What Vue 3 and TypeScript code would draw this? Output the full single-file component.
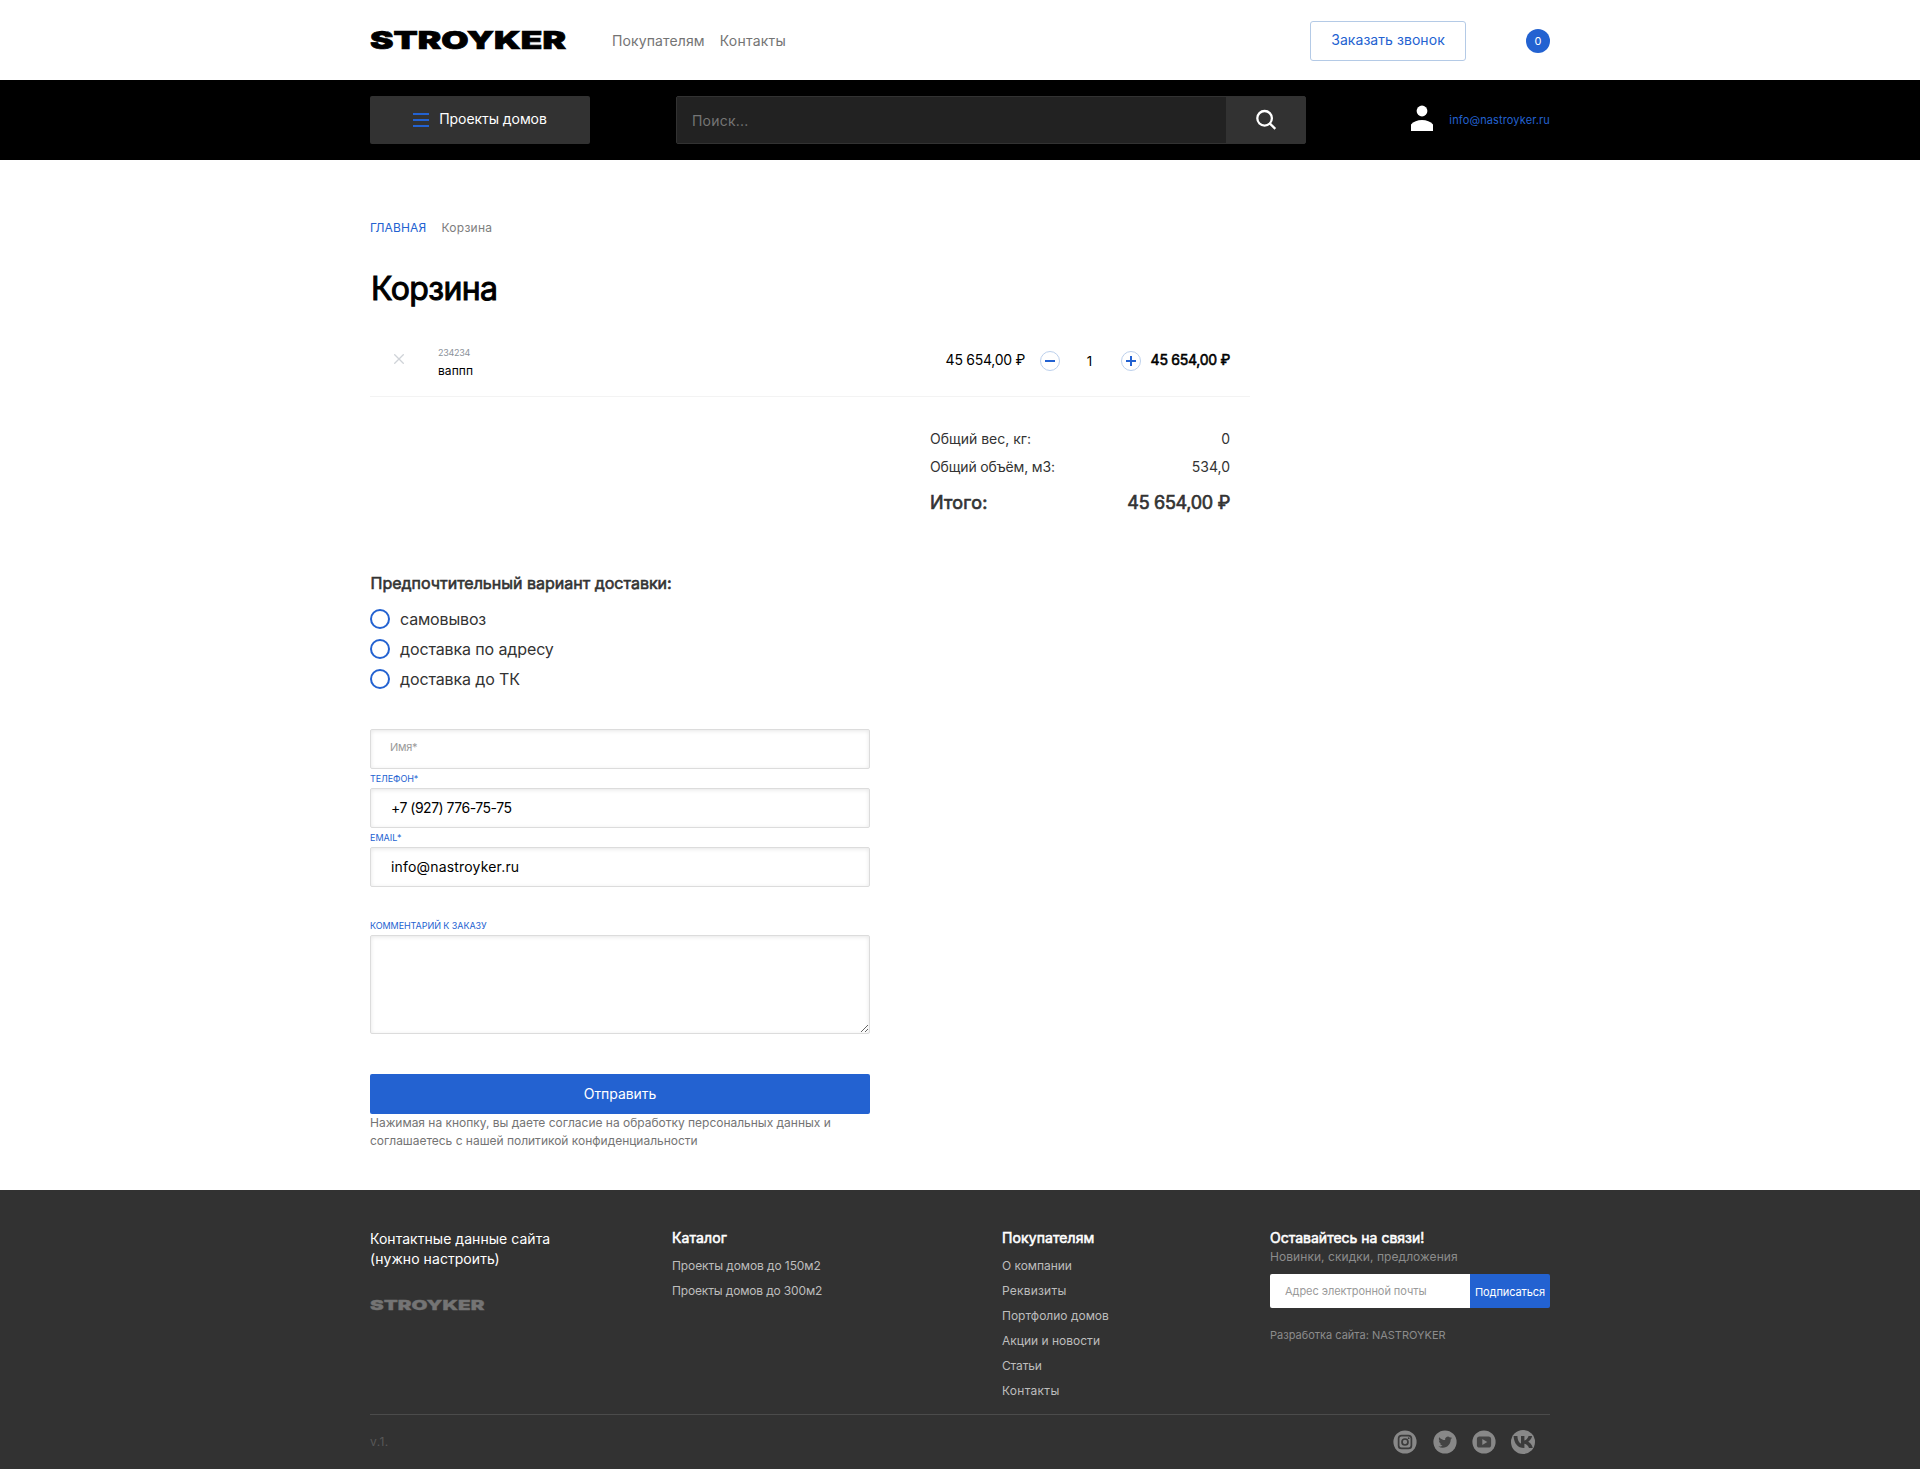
<script setup lang="ts">
import { ref } from 'vue'

interface Item {
  text: string
  spacing: number
}

const navLinks: Item[] = [
  { text: 'Покупателям', spacing: 0.12 },
  { text: 'Контакты', spacing: 0.22 },
]

const deliveries: Item[] = [
  { text: 'самовывоз', spacing: -0.16 },
  { text: 'доставка по адресу', spacing: -0.12 },
  { text: 'доставка до ТК', spacing: -0.13 },
]

const catalog: Item[] = [
  { text: 'Проекты домов до 150м2', spacing: -0.089 },
  { text: 'Проекты домов до 300м2', spacing: -0.151 },
]

const customerLinks: Item[] = [
  { text: 'О компании', spacing: -0.05 },
  { text: 'Реквизиты', spacing: 0.2 },
  { text: 'Портфолио домов', spacing: 0 },
  { text: 'Акции и новости', spacing: 0 },
  { text: 'Статьи', spacing: -0.15 },
  { text: 'Контакты', spacing: 0.27 },
]

const name = ref('')
const phone = ref('+7 (927) 776-75-75')
const email = ref('info@nastroyker.ru')
const comment = ref('')
const quantity = ref(1)
const delivery = ref('')
</script>

<template>
  <div class="page">
    <header>
      <div class="topbar wrap">
        <svg class="logo" viewBox="0 0 196 32" width="196" height="32">
          <text x="0" y="25" textLength="196" lengthAdjust="spacingAndGlyphs">STROYKER</text>
        </svg>
        <nav class="nav">
          <a v-for="l in navLinks" :key="l.text" :style="{ letterSpacing: l.spacing + 'px' }">{{ l.text }}</a>
        </nav>
        <button class="call" type="button">Заказать звонок</button>
        <span class="badge">0</span>
      </div>
      <div class="darkbar">
        <div class="wrap darkrow">
          <button class="menu" type="button">
            <span class="burger"><i></i><i></i><i></i></span>
            <span class="menu-label">Проекты домов</span>
          </button>
          <form class="search" @submit.prevent>
            <input type="text" placeholder="Поиск..." />
            <button type="submit" aria-label="Поиск">
              <svg width="22" height="22" viewBox="0 0 22 22" fill="none" stroke="#fff" stroke-width="2.3">
                <circle cx="9.6" cy="9.3" r="7.3" />
                <path d="M14.7 14.4l5.6 5.4" />
              </svg>
            </button>
          </form>
          <div class="user">
            <svg width="22" height="26" viewBox="0 0 22 26" fill="#fff">
              <circle cx="11" cy="6" r="5.4" />
              <path d="M0 26V19.6C2.4 16.6 6.4 15 11 15s8.6 1.6 11 4.6V26z" />
            </svg>
            <a>info@nastroyker.ru</a>
          </div>
        </div>
      </div>
    </header>

    <main class="wrap">
      <div class="crumbs"><a>ГЛАВНАЯ</a><span>Корзина</span></div>
      <h1>Корзина</h1>

      <section class="cart">
        <div class="product">
          <svg class="remove" width="10" height="10" viewBox="0 0 10 10" stroke="#cfd3d8" stroke-width="1.3">
            <path d="M.3.3l9.4 9.4M9.7.3L.3 9.7" />
          </svg>
          <div class="product-name">
            <small>234234</small>
            <span>ваппп</span>
          </div>
          <span class="price">45 654,00 ₽</span>
          <div class="qty">
            <button type="button" aria-label="Меньше">
              <svg width="10" height="10" viewBox="0 0 10 10"><path d="M0 4h10v2H0z" fill="#2362d1" /></svg>
            </button>
            <span>{{ quantity }}</span>
            <button type="button" aria-label="Больше">
              <svg width="10" height="10" viewBox="0 0 10 10"><path d="M0 4h4V0h2v4h4v2H6v4H4V6H0z" fill="#2362d1" /></svg>
            </button>
          </div>
          <span class="price sum">45 654,00 ₽</span>
        </div>
        <dl class="totals">
          <div><dt>Общий вес, кг:</dt><dd>0</dd></div>
          <div><dt class="volume">Общий объём, м3:</dt><dd>534,0</dd></div>
          <div class="grand"><dt>Итого:</dt><dd>45 654,00 ₽</dd></div>
        </dl>
      </section>

      <form class="order" @submit.prevent>
        <h2>Предпочтительный вариант доставки:</h2>
        <label v-for="d in deliveries" :key="d.text" class="radio">
          <input v-model="delivery" type="radio" name="delivery" :value="d.text" />
          <span :style="{ letterSpacing: d.spacing + 'px' }">{{ d.text }}</span>
        </label>

        <input v-model="name" class="field name" type="text" placeholder="Имя*" />
        <label class="caption tel" for="phone">ТЕЛЕФОН*</label>
        <input id="phone" v-model="phone" class="field phone" type="text" />
        <label class="caption" for="email">EMAIL*</label>
        <input id="email" v-model="email" class="field email" type="text" />
        <label class="caption comment-label" for="comment">КОММЕНТАРИЙ К ЗАКАЗУ</label>
        <textarea id="comment" v-model="comment" class="field"></textarea>
        <button class="submit" type="submit">Отправить</button>
        <p>Нажимая на кнопку, вы даете согласие на обработку персональных данных и<br />соглашаетесь с нашей политикой конфиденциальности</p>
      </form>
    </main>

    <footer>
      <div class="wrap">
        <div class="columns">
          <div class="about">
            <p>Контактные данные сайта<br /><span>(нужно настроить)</span></p>
            <svg class="logo" viewBox="0 0 115 20" width="115" height="20">
              <text x="0" y="14.6" textLength="114.500" lengthAdjust="spacingAndGlyphs">STROYKER</text>
            </svg>
          </div>
          <div class="links catalog">
            <h3>Каталог</h3>
            <a v-for="l in catalog" :key="l.text" :style="{ letterSpacing: l.spacing + 'px' }">{{ l.text }}</a>
          </div>
          <div class="links customers">
            <h3>Покупателям</h3>
            <a v-for="l in customerLinks" :key="l.text" :style="{ letterSpacing: l.spacing + 'px' }">{{ l.text }}</a>
          </div>
          <div class="subscribe">
            <h3>Оставайтесь на связи!</h3>
            <p class="hint">Новинки, скидки, предложения</p>
            <form @submit.prevent>
              <input type="text" placeholder="Адрес электронной почты" />
              <button type="submit">Подписаться</button>
            </form>
            <p class="credit">Разработка сайта: NASTROYKER</p>
          </div>
        </div>
        <div class="bottom">
          <span class="version">v.1.</span>
          <div class="social">
            <svg width="24" height="24" viewBox="0 0 24 24">
              <circle cx="12" cy="12" r="11.6" fill="#888" />
              <rect x="5.6" y="5.6" width="12.8" height="12.8" rx="3" fill="none" stroke="#3b3b3b" stroke-width="1.7" />
              <circle cx="12" cy="12" r="3" fill="none" stroke="#3b3b3b" stroke-width="1.7" />
              <circle cx="15.7" cy="8.2" r=".9" fill="#3b3b3b" />
            </svg>
            <svg width="24" height="24" viewBox="0 0 24 24">
              <circle cx="12" cy="12" r="11.6" fill="#888" />
              <path transform="translate(5.4 5.4) scale(.57)" fill="#444" d="M23.95 4.57a10 10 0 0 1-2.82.77 4.96 4.96 0 0 0 2.16-2.72c-.95.55-2 .95-3.13 1.18a4.92 4.92 0 0 0-8.38 4.48C7.69 8.1 4.07 6.13 1.64 3.16a4.93 4.93 0 0 0 1.52 6.57 4.9 4.9 0 0 1-2.23-.61v.06a4.92 4.92 0 0 0 3.95 4.83 5 5 0 0 1-2.21.08 4.94 4.94 0 0 0 4.6 3.42A9.87 9.87 0 0 1 0 19.54a13.99 13.99 0 0 0 7.55 2.21c9.05 0 14-7.5 14-13.98v-.64a9.94 9.94 0 0 0 2.4-2.56z" />
            </svg>
            <svg width="24" height="24" viewBox="0 0 24 24">
              <circle cx="12" cy="12" r="11.6" fill="#888" />
              <rect x="4.9" y="6.5" width="14.2" height="11" rx="2.6" fill="#444" />
              <path d="M10.3 9v6l5-3z" fill="#888" />
            </svg>
            <svg width="24" height="24" viewBox="0 0 24 24">
              <circle cx="12" cy="12" r="12" fill="#888" />
              <path fill="#3b3b3b" d="M13 18C6.800 18 3 13.600 2.600 6h3.800c.2 4.600 1.900 7 3.600 7.500V6h3.400v4.400c1.800-.2 3.500-2.200 4.200-4.400h3.500c-.5 2.700-2.400 4.800-3.900 5.700 1.500.8 3.700 2.600 4.600 6.300H18c-.7-2.300-2.400-4-4.600-4.300V18z" />
            </svg>
          </div>
        </div>
      </div>
    </footer>
  </div>
</template>

<style>
body {
  margin: 0;
  background: #fff;
}
</style>

<style scoped>
.page {
  height: 1469px;
  overflow: hidden;
  display: flex;
  flex-direction: column;
  font-family: Inter, 'Noto Sans', sans-serif;
  font-size: 14px;
  color: #333;
}
.page *,
.page *::before {
  box-sizing: border-box;
}
.wrap {
  width: 1180px;
  margin: 0 auto;
}
button,
input,
textarea {
  font-family: inherit;
  margin: 0;
  outline: none;
}
button {
  padding: 0;
  border: 0;
}
h1,
h2,
h3,
p,
dl,
dd {
  margin: 0;
  font-weight: 400;
}
svg {
  display: block;
  flex: none;
}
.logo {
  overflow: visible;
}
.logo text {
  font-family: Inter, sans-serif;
  font-weight: 900;
}

/* top bar */
.topbar {
  height: 80px;
  display: flex;
  align-items: center;
}
.topbar .logo text {
  font-size: 24.4px;
  fill: #000;
  stroke: #000;
  stroke-width: 0.7px;
}
.nav {
  display: flex;
  gap: 15px;
  margin-left: 46px;
  line-height: 20px;
  padding-top: 2px;
  color: #747474;
}
.call {
  width: 156px;
  height: 40px;
  margin-left: auto;
  margin-top: 2px;
  padding-bottom: 3px;
  background: #fff;
  border: 1px solid #b4cae6;
  border-radius: 3px;
  font-size: 14px;
  letter-spacing: 0.062px;
  color: #2362d1;
}
.badge {
  width: 24px;
  height: 24px;
  margin-left: 60px;
  margin-top: 2px;
  border-radius: 50%;
  background: #2362d1;
  color: #fff;
  font-size: 11px;
  line-height: 24px;
  text-align: center;
}
.darkbar {
  height: 80px;
  background: #000;
}
.darkrow {
  height: 80px;
  display: flex;
  align-items: center;
}
.menu {
  width: 220px;
  height: 48px;
  display: flex;
  align-items: center;
  justify-content: center;
  gap: 10px;
  background: #323232;
  border-radius: 2px;
  font-size: 14px;
  color: #fff;
}
.menu-label {
  letter-spacing: -0.06px;
  margin-top: -3px;
}
.burger {
  width: 16px;
  height: 14px;
  display: flex;
  flex-direction: column;
  justify-content: space-between;
}
.burger i {
  height: 2px;
  background: #2362d1;
}
.search {
  width: 630px;
  height: 48px;
  margin-left: 86px;
  display: flex;
  border: 1px solid #323232;
  border-radius: 2px;
  background: #323232;
}
.search input {
  width: 549px;
  height: 46px;
  border: 0;
  padding: 0 15px;
  background: #222;
  color: #fff;
  font-size: 14px;
  letter-spacing: 0.2px;
}
.search input::placeholder {
  color: #757575;
  opacity: 1;
}
.search button {
  flex: 1;
  display: flex;
  align-items: center;
  justify-content: center;
  background: #323232;
}
.user {
  margin-left: auto;
  display: flex;
  align-items: center;
  gap: 16px;
}
.user svg {
  margin-top: -4px;
}
.user a {
  font-size: 11px;
  letter-spacing: 0.132px;
  line-height: 16px;
  margin-top: -1px;
  color: #2362d1;
}

/* cart */
main {
  height: 1030px;
}
.crumbs {
  display: flex;
  padding-top: 58px;
  font-size: 12px;
  line-height: 20px;
}
.crumbs a {
  color: #2362d1;
  letter-spacing: 0.14px;
  margin-right: 15.200px;
}
.crumbs span {
  color: #7d7d7d;
  letter-spacing: 0.25px;
}
h1 {
  height: 40px;
  margin-top: 30px;
  padding-left: 1px;
  font-size: 32px;
  line-height: 41px;
  letter-spacing: -0.6px;
  color: #000;
  -webkit-text-stroke: 1px #000;
}
.cart {
  width: 880px;
}
.product {
  height: 89px;
  display: flex;
  border-bottom: 1px solid #f3f3f3;
}
.remove {
  margin: 46px 0 0 24px;
}
.product-name {
  width: 506px;
  margin-left: 34px;
  padding-top: 37px;
  display: flex;
  flex-direction: column;
}
.product-name small {
  font-size: 9px;
  line-height: 16px;
  letter-spacing: -0.3px;
  color: #8b929a;
}
.product-name span {
  font-size: 12px;
  line-height: 20px;
  letter-spacing: 0.093px;
  color: #000;
}
.price {
  width: 81px;
  padding-top: 42px;
  line-height: 20px;
  letter-spacing: -0.27px;
  white-space: nowrap;
  color: #000;
  text-align: right;
}
.sum {
  -webkit-text-stroke: 0.55px #000;
  margin-left: 8px;
}
.qty {
  width: 101px;
  margin-left: 15px;
  padding-top: 43px;
  display: flex;
  justify-content: space-between;
  line-height: 21px;
  font-size: 13.300px;
  color: #000;
}
.qty span {
  padding-right: 2px;
}
.qty button {
  width: 20px;
  height: 20px;
  display: flex;
  align-items: center;
  justify-content: center;
  background: #fff;
  border: 1px solid #bcd0ec;
  border-radius: 50%;
}
.totals {
  width: 300px;
  margin: 32px 0 0 560px;
}
.totals > div {
  display: flex;
  justify-content: space-between;
  height: 28px;
  line-height: 20px;
}
.totals .volume {
  letter-spacing: -0.15px;
}
.totals .grand {
  font-size: 18px;
  line-height: 36px;
  -webkit-text-stroke: 0.65px #333;
}
.grand dt {
  letter-spacing: 0.22px;
}
.grand dd {
  letter-spacing: -0.29px;
}

/* order form */
.order {
  width: 500px;
  display: flex;
  flex-direction: column;
  padding-top: 60px;
}
h2 {
  height: 20px;
  margin-bottom: 16px;
  padding-left: 0.5px;
  font-size: 16px;
  line-height: 20px;
  letter-spacing: 0;
  -webkit-text-stroke: 0.6px #333;
}
.radio {
  height: 20px;
  margin-bottom: 10px;
  display: flex;
  gap: 10px;
  font-size: 16px;
  line-height: 21px;
}
.radio input {
  appearance: none;
  width: 20px;
  height: 20px;
  border: 2px solid #2362d1;
  border-radius: 50%;
}
.field {
  width: 500px;
  height: 40px;
  padding: 0 20px 2px;
  border: 1px solid #dcdcdc;
  border-radius: 2px;
  background: #fff;
  box-shadow: inset 0 1px 4px rgba(0, 0, 0, 0.1);
  font-size: 14px;
  color: #000;
}
.name {
  margin-top: 30px;
  padding: 0 19px 4px;
  font-size: 11px;
  letter-spacing: -0.3px;
}
.name::placeholder {
  color: #9a9a9a;
  opacity: 1;
}
.phone {
  letter-spacing: -0.5px;
}
.email {
  letter-spacing: 0.18px;
}
.caption {
  height: 19px;
  font-size: 9px;
  line-height: 19px;
  letter-spacing: 0;
  color: #2362d1;
}
.tel {
  letter-spacing: -0.08px;
}
.comment-label {
  margin-top: 29px;
  letter-spacing: -0.06px;
}
textarea.field {
  height: 99px;
  resize: both;
}
.submit {
  height: 40px;
  margin-top: 40px;
  padding-bottom: 2px;
  background: #2362d1;
  border-radius: 2px;
  color: #fff;
  font-size: 14px;
  letter-spacing: -0.06px;
}
.order p {
  font-size: 12px;
  line-height: 18px;
  letter-spacing: -0.015px;
  white-space: nowrap;
  color: #747474;
}

/* footer */
footer {
  height: 279px;
  background: #323232;
}
.columns {
  height: 225px;
  display: flex;
  border-bottom: 1px solid #4b4b4b;
}
.about {
  width: 302px;
  padding-top: 39px;
  line-height: 20px;
  letter-spacing: 0.04px;
  color: #fff;
}
.about span {
  letter-spacing: 0.06px;
}
.about .logo {
  margin-top: 26px;
}
.about .logo text {
  font-size: 13.200px;
  letter-spacing: 0;
  fill: #747474;
  stroke: #747474;
  stroke-width: 0.3px;
}
h3 {
  font-size: 14px;
  line-height: 20px;
  color: #fff;
  -webkit-text-stroke: 0.55px #fff;
}
.links {
  padding-top: 38px;
  display: flex;
  flex-direction: column;
}
.links h3 {
  margin-bottom: 5px;
}
.catalog {
  width: 330px;
}
.catalog h3,
.customers h3 {
  letter-spacing: 0.1px;
}
.customers {
  width: 268px;
}
.links a {
  font-size: 12px;
  line-height: 25px;
  color: #bdbdbd;
}
.subscribe {
  width: 280px;
  padding-top: 38px;
}
.hint {
  height: 26px;
  font-size: 12px;
  line-height: 18px;
  letter-spacing: 0.06px;
  color: #8c8c8c;
}
.subscribe form {
  display: flex;
  height: 34px;
}
.subscribe input {
  width: 200px;
  border: 0;
  padding: 0 15px;
  border-radius: 2px 0 0 2px;
  background: #fff;
  font-size: 11px;
  letter-spacing: -0.05px;
}
.subscribe input::placeholder {
  color: #9a9a9a;
  opacity: 1;
}
.subscribe button {
  width: 80px;
  padding-top: 2px;
  background: #2362d1;
  border-radius: 0 2px 2px 0;
  color: #fff;
  font-size: 11px;
  letter-spacing: -0.094px;
}
.credit {
  margin-top: 17px;
  font-size: 11px;
  line-height: 20px;
  color: #8c8c8c;
}
.bottom {
  height: 54px;
  display: flex;
  align-items: center;
  justify-content: space-between;
  padding-right: 15px;
}
.version {
  margin-top: -1px;
  font-size: 12px;
  letter-spacing: 0.45px;
  color: #585858;
}
.social {
  display: flex;
  gap: 15.200px;
}
</style>
